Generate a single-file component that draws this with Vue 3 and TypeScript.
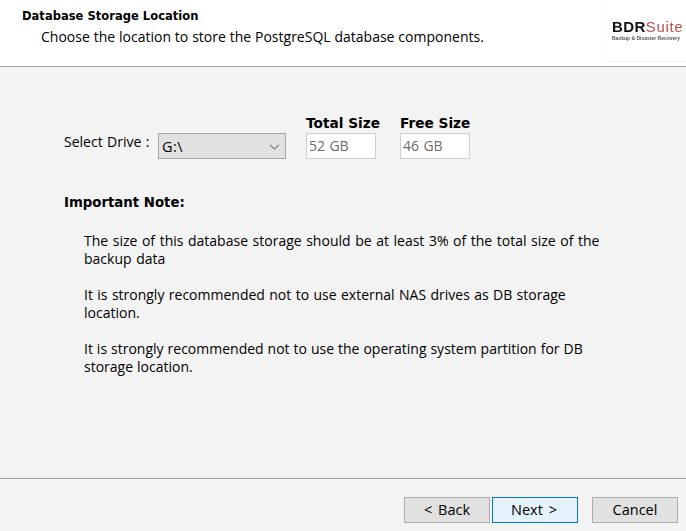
<script setup lang="ts">
const notes: string[] = [
  'The size of this database storage should be at least 3% of the total size of the backup data',
  'It is strongly recommended not to use external NAS drives as DB storage location.',
  'It is strongly recommended not to use the operating system partition for DB storage location.',
]
</script>

<template>
  <div class="wizard">
    <header class="head">
      <div class="head-text">
        <div class="title">Database Storage Location</div>
        <div class="sub">Choose the location to store the PostgreSQL database components.</div>
      </div>
      <div class="logo">
        <div class="logo-main"><span class="bdr">BDR</span><span class="suite">Suite</span></div>
        <div class="logo-tag">Backup &amp; Disaster Recovery</div>
      </div>
    </header>

    <main class="body">
      <div class="drive-row">
        <span class="drive-label">Select Drive :</span>
        <div class="combo">
          <span class="combo-value">G:\</span>
          <svg width="11" height="6" viewBox="0 0 11 6"><path d="M1 0.8 L5.5 5 L10 0.8" fill="none" stroke="#444" stroke-width="1" /></svg>
        </div>
        <div class="size">
          <div class="size-label">Total Size</div>
          <div class="size-box">52 GB</div>
        </div>
        <div class="size">
          <div class="size-label">Free Size</div>
          <div class="size-box">46 GB</div>
        </div>
      </div>

      <div class="note-title">Important Note:</div>
      <p v-for="n in notes" :key="n" class="note">{{ n }}</p>
    </main>

    <footer class="foot">
      <button class="btn">&lt; Back</button>
      <button class="btn primary">Next &gt;</button>
      <button class="btn cancel">Cancel</button>
    </footer>
  </div>
</template>

<style>
html, body { margin: 0; background: #f3f3f3; }
</style>

<style scoped>
.wizard {
  width: 686px;
  height: 531px;
  display: flex;
  flex-direction: column;
  background: #f3f3f3;
  color: #000;
  font-family: "Open Sans", "Noto Sans", sans-serif;
  font-size: 14px;
  word-spacing: 0.75px;
  overflow: hidden;
}
.head {
  height: 66px;
  flex: none;
  background: #fff;
  border-bottom: 1px solid #a0a0a0;
  display: flex;
  justify-content: space-between;
}
.head-text { padding: 9px 0 0 22px; }
.title {
  font-family: "DejaVu Sans", sans-serif;
  font-weight: 700;
  font-size: 11.5px;
  line-height: 15px;
  word-spacing: 0;
  letter-spacing: 0.03px;
}
.sub {
  margin: 3px 0 0 19px;
  line-height: 20px;
  font-size: 14px;
  word-spacing: 0.25px;
}
.logo {
  width: 79px;
  height: 62px;
  box-sizing: border-box;
  padding: 19px 0 0 4px;
  background: #fff;
  border-left: 1px solid #fafafa;
  border-bottom: 1px solid #f6f6f6;
  filter: blur(0.3px);
}
.logo-main {
  font-family: "Liberation Sans", sans-serif;
  font-size: 15px;
  line-height: 16px;
  white-space: nowrap;
}
.bdr { font-weight: 700; color: #111; letter-spacing: 0.4px; }
.suite { color: #c0504d; letter-spacing: 0.7px; }
.logo-tag {
  font-family: "Liberation Sans", sans-serif;
  font-weight: 700;
  font-size: 5px;
  line-height: 6px;
  color: #555;
  word-spacing: 0;
  white-space: nowrap;
}
.body {
  flex: 1;
  padding: 47px 0 0 64px;
  border-bottom: 1px solid #a0a0a0;
}
.drive-row { display: flex; align-items: flex-end; }
.drive-label { width: 94px; padding-bottom: 7px; line-height: 20px; }
.combo {
  width: 128px;
  height: 26px;
  box-sizing: border-box;
  background: #e1e1e1;
  border: 1px solid #a6a6a6;
  display: flex;
  align-items: center;
  justify-content: space-between;
  padding: 1px 5px 0 3px;
}
.combo-value { letter-spacing: 0.5px; font-size: 14.5px; }
.size { margin-left: 20px; width: 70px; }
.size + .size { margin-left: 24px; }
.size-label {
  font-family: "DejaVu Sans", sans-serif;
  font-weight: 700;
  font-size: 13.7px;
  line-height: 19px;
  word-spacing: 0;
  white-space: nowrap;
}
.size-box {
  height: 26px;
  box-sizing: border-box;
  background: #fff;
  border: 1px solid #cfcfcf;
  color: #6d6d6d;
  padding: 0 2px;
  line-height: 24px;
}
.note-title {
  margin-top: 35px;
  font-family: "DejaVu Sans", sans-serif;
  font-weight: 700;
  font-size: 13.3px;
  line-height: 18px;
  word-spacing: 0;
}
.note {
  margin: 18px 0 0 20px;
  width: 530px;
  line-height: 18px;
}
.note:nth-of-type(1) { margin-top: 20px; word-spacing: 0.94px; }
.note:nth-of-type(3) { word-spacing: 0.33px; }
.foot {
  height: 52px;
  flex: none;
  display: flex;
  padding: 18px 0 0 404px;
  box-sizing: border-box;
}
.btn {
  width: 86px;
  height: 26px;
  box-sizing: border-box;
  background: #e1e1e1;
  border: 1px solid #adadad;
  font: inherit;
  font-size: 14.5px;
  word-spacing: 2px;
  color: #000;
  padding: 0 0 2px;
}
.primary { margin-left: 2px; padding-right: 2px; background: #e5f1fb; border-color: #0078d7; }
.cancel { margin-left: 14px; }
</style>
